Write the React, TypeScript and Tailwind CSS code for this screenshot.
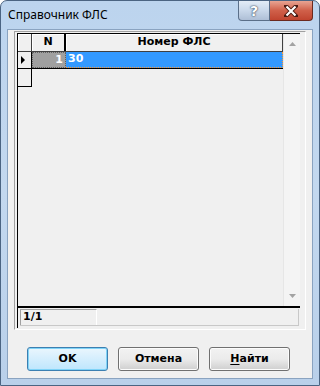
import React from "react";

function CaptionButtons() {
	return (
		<div className="absolute right-[6px] top-0 flex">
			<div className="w-[32px] h-[20px] rounded-bl-[4px] border border-t-0 border-[#5a6f89] bg-gradient-to-b from-[#e3ecf6] via-[#c9d8ea] to-[#aebfd6] flex items-center justify-center">
				<span
					className="text-white font-bold text-[14px] leading-none"
					style={{ textShadow: "0 0 2px #2c3e55, 0 0 1px #2c3e55" }}
				>
					?
				</span>
			</div>
			<div className="w-[43px] h-[20px] rounded-br-[4px] border border-t-0 border-l-0 border-[#6b2a1f] bg-gradient-to-b from-[#e8a493] via-[#d0604a] to-[#c0442f] flex items-center justify-center">
				<svg width="14" height="12" viewBox="0 0 14 12">
					<path d="M2 1 L12 11 M12 1 L2 11" stroke="#4a1a12" strokeWidth="4" strokeLinecap="square" />
					<path d="M2.5 1.5 L11.5 10.5 M11.5 1.5 L2.5 10.5" stroke="#ffffff" strokeWidth="2.2" />
				</svg>
			</div>
		</div>
	);
}

function DlgButton({ label, def, u }: { label: string; def?: boolean; u?: boolean }) {
	return (
		<div
			className={
				"w-[81px] h-[24px] rounded-[3px] border flex items-center justify-center font-bold text-[11px] text-black " +
				(def
					? "border-[#3c7fb1] bg-gradient-to-b from-[#eaf6fd] to-[#bee6fd] shadow-[inset_0_0_0_1px_#7fd3f7]"
					: "border-[#707070] bg-gradient-to-b from-[#f2f2f2] via-[#ebebeb] to-[#cfcfcf] shadow-[inset_0_0_0_1px_#fcfcfc]")
			}
		>
			{u ? (
				<span>
					<span className="underline underline-offset-2">Н</span>
					{label.slice(1)}
				</span>
			) : (
				label
			)}
		</div>
	);
}

export default function App() {
	return (
		<div
			className="relative w-[320px] h-[386px] rounded-t-[7px] border border-[#4b6482] bg-gradient-to-b from-[#bcd4ee] via-[#c3d8ef] to-[#b9d0ea] overflow-hidden"
			style={{ fontFamily: "'DejaVu Sans', Tahoma, sans-serif" }}
		>
			<div className="h-[28px] flex items-center pl-[7px] text-[12px] text-black" style={{ fontFamily: "'Noto Sans', 'Open Sans', sans-serif" }}>
				Справочник ФЛС
			</div>
			<CaptionButtons />

			<div className="mx-[6px] border border-[#8aa3c0] bg-[#f0f0f0] h-[350px] flex flex-col">
				{/* grid panel */}
				<div className="ml-[6px] mt-[1px] w-[292px] h-[299px] border border-[#a0a0a0] border-r-white border-b-white p-[1px] pl-[2px]">
					<div className="w-[283px] h-full flex flex-col border-t border-l border-black">
						<div className="flex flex-1">
							<div className="flex flex-col w-[265px]">
								{/* header */}
								<div className="flex h-[18px] border-b border-[#404040] text-[11px] font-bold">
									<div className="w-[14px] border-r border-[#404040] shadow-[inset_1px_1px_0_#fff]" />
									<div className="w-[34px] border-r-2 border-black flex items-center justify-center shadow-[inset_1px_1px_0_#fff]">N</div>
									<div className="flex-1 border-r border-[#404040] flex items-center justify-center shadow-[inset_1px_1px_0_#fff]">
										Номер ФЛС
									</div>
								</div>
								{/* row */}
								<div className="flex h-[17px] border-b border-black text-[11px] font-bold">
									<div className="w-[14px] border-r border-black flex items-center pl-[3px]">
										<svg width="5" height="8" viewBox="0 0 5 8">
											<path d="M0 0 L4 4 L0 8 Z" fill="#000" />
										</svg>
									</div>
									<div className="w-[34px] bg-[#a0a0a0] border border-dotted border-[#606060] text-white flex items-center justify-end pr-[2px]">1</div>
									<div className="flex-1 bg-[#3399ff] border-b border-r border-dotted border-[#ff9933] text-white flex items-center pl-[2px]">30</div>
								</div>
								<div className="w-[14px] h-[18px] border-r border-b border-black" />
							</div>
							{/* scrollbar */}
							<div className="w-[17px] flex flex-col justify-between items-center border-l border-[#e6e6e6] bg-[#f4f4f4] ml-auto py-[8px]">
								<svg width="7" height="4" viewBox="0 0 7 4">
									<path d="M3.5 0 L7 4 L0 4 Z" fill="#a3a3a3" />
								</svg>
								<svg width="7" height="4" viewBox="0 0 7 4">
									<path d="M0 0 L7 0 L3.5 4 Z" fill="#a3a3a3" />
								</svg>
							</div>
						</div>
						{/* status */}
						<div className="h-[22px] border-t-2 border-black flex items-center pl-[2px] pr-[1px] pb-[1px]">
							<div className="flex w-full h-[17px] border-r border-b border-[#c8c8c8]">
								<div className="w-[77px] border-t border-l border-[#a0a0a0] border-r border-r-white text-[11px] font-bold flex items-center pl-[2px]">1/1</div>
								<div className="flex-1" />
							</div>
						</div>
					</div>
				</div>

				{/* buttons */}
				<div className="flex gap-[10px] pl-[19px] mt-[17px]">
					<DlgButton label="OK" def />
					<DlgButton label="Отмена" />
					<DlgButton label="Найти" u />
				</div>
			</div>
		</div>
	);
}
